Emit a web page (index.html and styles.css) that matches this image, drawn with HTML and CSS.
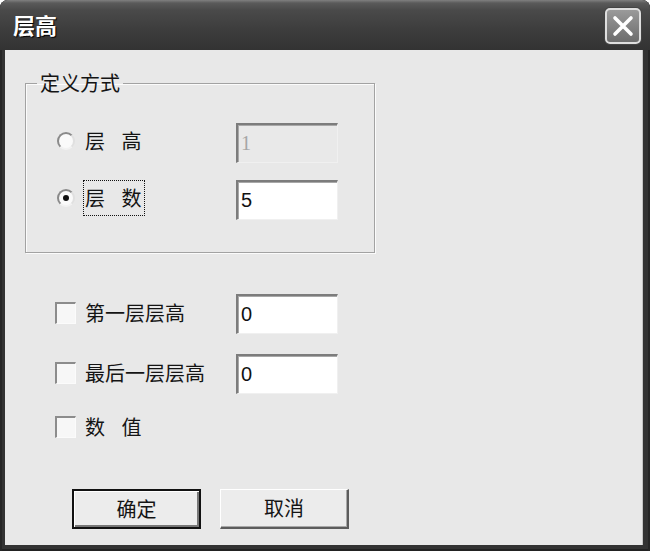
FILE: index.html
```html
<!DOCTYPE html>
<html lang="zh">
<head>
<meta charset="utf-8">
<title>层高</title>
<link rel="stylesheet" href="styles.css">
</head>
<body>
<div class="window">
  <div class="titlebar">
    <span class="title">层高</span>
    <div class="close">
      <svg width="22" height="22" viewBox="0 0 22 22"><path d="M3 3 L19 19 M19 3 L3 19" stroke="#fff" stroke-width="3.6" stroke-linecap="round"/></svg>
    </div>
  </div>
  <div class="client">
    <fieldset class="group">
      <legend class="legend">定义方式</legend>
      <div class="group-body">
        <div class="row">
          <span class="radio"></span>
          <span class="label wide">层 高</span>
          <div class="field disabled">1</div>
        </div>
        <div class="row">
          <span class="radio checked"></span>
          <span class="label wide"><span class="focus">层 数</span></span>
          <div class="field">5</div>
        </div>
      </div>
    </fieldset>
    <div class="options">
      <div class="row opt">
        <span class="check"></span>
        <span class="label">第一层层高</span>
        <div class="field">0</div>
      </div>
      <div class="row opt">
        <span class="check"></span>
        <span class="label">最后一层层高</span>
        <div class="field">0</div>
      </div>
      <div class="row opt short">
        <span class="check"></span>
        <span class="label wide">数 值</span>
      </div>
    </div>
    <div class="buttons">
      <div class="btn default"><span>确定</span></div>
      <div class="btn"><span>取消</span></div>
    </div>
  </div>
</div>
</body>
</html>
```

FILE: styles.css
```css
* { box-sizing: border-box; }
html, body { margin: 0; padding: 0; background: #ffffff; }
body {
  font-family: "Noto Sans CJK SC", "Liberation Sans", sans-serif;
  color: #141414;
}
.window {
  width: 650px;
  height: 551px;
  background: #333333;
  border-radius: 8px 8px 0 0;
  display: flex;
  flex-direction: column;
  box-shadow: inset 2px 0 0 #262626, inset -2px 0 0 #262626, inset 0 -2px 0 #222;
}
.titlebar {
  height: 50px;
  flex: none;
  display: flex;
  align-items: center;
  padding: 0 9px 0 13px;
  border-radius: 8px 8px 0 0;
  background: linear-gradient(#808080 0, #5a5a5a 3px, #4a4a4a 10px, #3e3e3e 28px, #333333 50px);
}
.title {
  color: #ffffff;
  font-size: 22px;
  font-weight: bold;
  line-height: 24px;
  text-shadow: 1px 1px 1px #000;
  margin-top: -2px;
}
.close {
  margin-left: auto;
  width: 36px;
  height: 36px;
  margin-top: 2px;
  border: 2px solid #dedede;
  border-radius: 5px;
  background: linear-gradient(#9a9a9a, #6c6c6c);
  display: flex;
  align-items: center;
  justify-content: center;
  box-shadow: 0 0 0 1px #444;
}
.client {
  flex: 1;
  margin: 0 7px 6px 5px;
  background: #e8e8e8;
  border-right: 1px solid #c4c4c4;
  padding: 25px 0 0 20px;
  display: flex;
  flex-direction: column;
}
.group {
  width: 350px;
  margin: 0;
  padding: 0;
  border: 1px solid #a2a2a2;
  box-shadow: inset 1px 1px 0 #fbfbfb, 1px 1px 0 #fbfbfb;
}
.legend {
  margin-left: 11px;
  padding: 0 3px;
  font-size: 20px;
  line-height: 16px;
}
.group-body {
  padding: 32px 0 32px 0;
  display: flex;
  flex-direction: column;
  gap: 17px;
}
.row {
  display: flex;
  align-items: center;
  height: 40px;
  padding-left: 31px;
}
.label {
  width: 151px;
  flex: none;
  font-size: 20px;
  line-height: 24px;
  margin-top: -4px;
  white-space: pre;
}
.wide { word-spacing: 12px; }
.focus {
  border: 1px dotted #111;
  padding: 2px 3px 3px 1px;
  margin-left: -2px;
}
.radio {
  width: 18px;
  height: 18px;
  flex: none;
  margin-right: 10px;
  margin-top: -4px;
  border-radius: 50%;
  border: 2px solid;
  border-color: #8a8a8a #e0e0e0 #f2f2f2 #8a8a8a;
  background: #fafafa;
  display: flex;
  align-items: center;
  justify-content: center;
}
.radio.checked::after {
  content: "";
  width: 6px;
  height: 6px;
  border-radius: 50%;
  background: #111;
}
.field {
  width: 102px;
  height: 40px;
  flex: none;
  background: #ffffff;
  border-style: solid;
  border-width: 2px 1px 1px 2px;
  border-color: #7c7c7c #f0f0f0 #f0f0f0 #7c7c7c;
  box-shadow: inset 1px 1px 0 #a8a8a8;
  font-family: "Liberation Sans", sans-serif;
  font-size: 20px;
  line-height: 36px;
  padding-left: 3px;
  color: #111;
}
.field.disabled {
  background: #e9e9e9;
  color: #a6a6a6;
  font-family: "Liberation Serif", serif;
}
.options {
  margin-top: 41px;
  display: flex;
  flex-direction: column;
  gap: 20px;
}
.opt { padding-left: 30px; }
.opt .label { margin-top: -2px; }
.opt.short { height: 28px; }
.check {
  width: 21px;
  height: 22px;
  flex: none;
  margin-right: 9px;
  margin-top: -2px;
  border-style: solid;
  border-width: 2px 1px 1px 2px;
  border-color: #8c8c8c #fbfbfb #fbfbfb #8c8c8c;
  background: #f7f7f7;
}
.buttons {
  margin-top: 47px;
  padding-left: 47px;
  display: flex;
  gap: 19px;
}
.btn {
  width: 129px;
  height: 40px;
  display: flex;
  align-items: center;
  justify-content: center;
  background: #ececec;
  border-style: solid;
  border-width: 1px 2px 2px 1px;
  border-color: #ffffff #5c5c5c #5c5c5c #ffffff;
  box-shadow: inset -1px -1px 0 #a8a8a8;
  font-size: 20px;
}
.btn span { margin-top: -2px; }
.btn.default {
  border: 2px solid #111;
  box-shadow: inset 1px 1px 0 #fff, inset -2px -2px 0 #777;
}
```
